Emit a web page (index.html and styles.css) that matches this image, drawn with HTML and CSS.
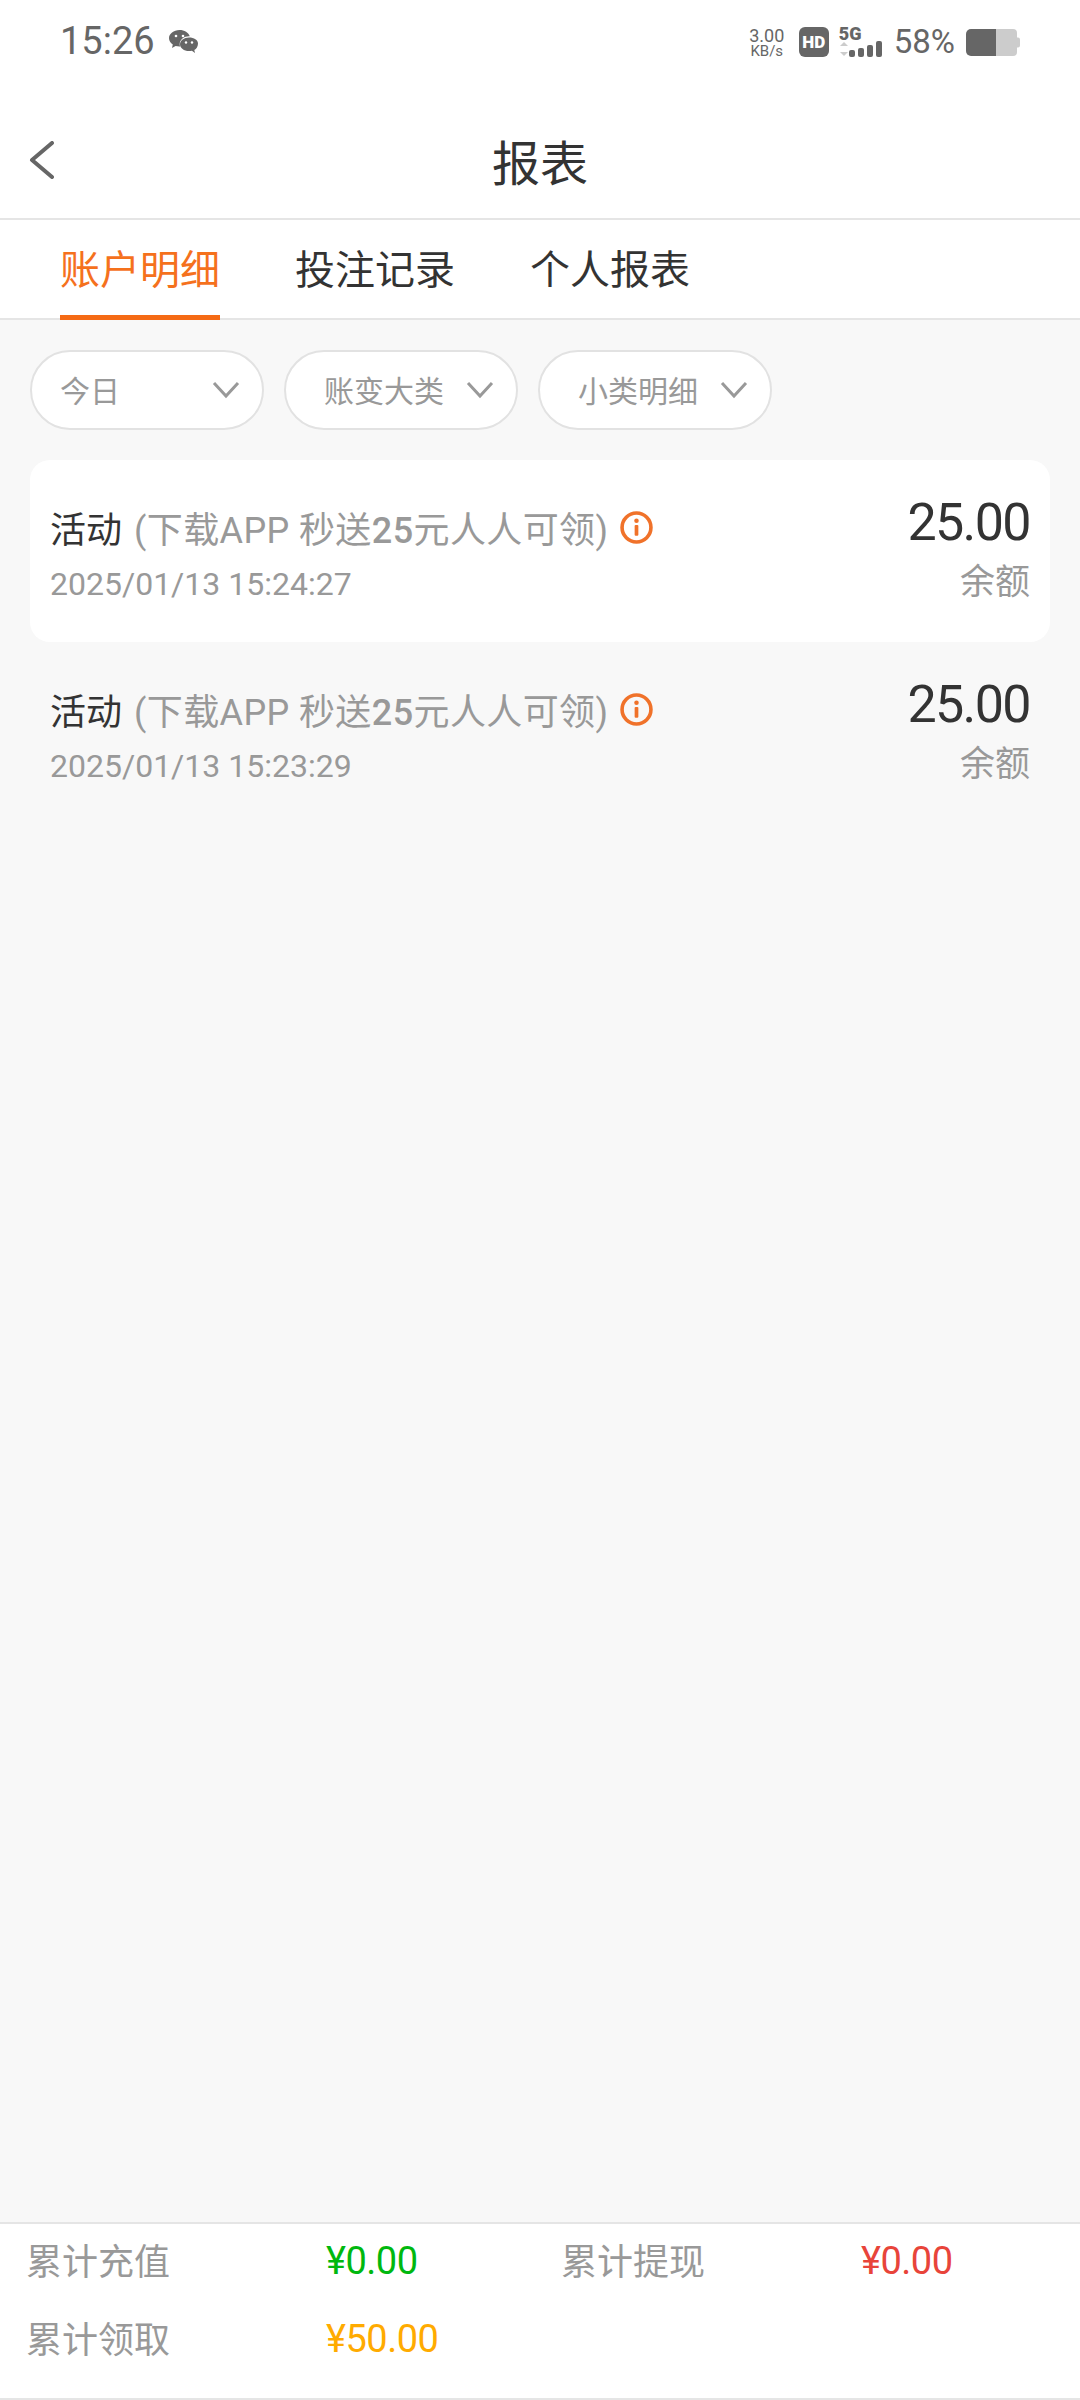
FILE: index.html
```html
<!DOCTYPE html>
<html lang="zh-CN">
<head>
  <meta charset="UTF-8" />
  <meta name="viewport" content="width=device-width, initial-scale=1.0"/>
  <title>报表</title>
  <link rel="stylesheet" href="styles.css">
</head>
<body>
  <div class="status-bar">
    <div class="status-left">
      <span class="status-time">15:26</span>
      <svg class="wechat-icon" viewBox="0 0 29 24" width="29" height="24">
        <path fill="#666" d="M10.5 0C4.7 0 0 3.7 0 8.3c0 2.6 1.5 4.8 3.8 6.3L3 18l3.6-1.9c1.2.3 2.5.5 3.9.5h.6a7.2 7.2 0 0 1-.4-2.4c0-4.6 4.3-8 9.4-8h.7C19.600 2.600 15.400 0 10.500 0z"/>
        <path fill="#666" d="M20 7.500c-5 0-9 3-9 6.800s4 6.800 9 6.800c1 0 2-.1 2.900-.4L26 23l-.7-3c2.200-1.300 3.700-3.700 3.700-6.600 0-3.500-4-5.900-9-5.900z"/>
        <circle cx="7" cy="6" r="1.300" fill="#fff"/><circle cx="14" cy="6" r="1.300" fill="#fff"/>
        <circle cx="17" cy="12.500" r="1.200" fill="#fff"/><circle cx="23" cy="12.500" r="1.200" fill="#fff"/>
      </svg>
    </div>
    <div class="status-right">
      <div class="net-speed"><span class="net-value">3.00</span><span class="net-unit">KB/s</span></div>
      <span class="hd-badge">HD</span>
      <div class="signal">
        <span class="signal-5g">5G</span>
        <svg class="signal-svg" viewBox="0 0 45 16" width="45" height="16">
          <path fill="#ccc" d="M5 1l4 4H1z"/><path fill="#ccc" d="M5 15l4-4H1z"/>
          <rect x="10" y="9" width="6" height="7" rx="2" fill="#666"/>
          <rect x="19" y="7" width="6" height="9" rx="2" fill="#666"/>
          <rect x="28" y="4" width="6" height="12" rx="2" fill="#666"/>
          <rect x="37" y="0" width="6" height="16" rx="2" fill="#666"/>
        </svg>
      </div>
      <span class="battery-text">58%</span>
      <svg class="battery" viewBox="0 0 54 27" width="54" height="27">
        <path fill="#ccc" d="M30 0h17a4 4 0 0 1 4 4v4.500h1a2 2 0 0 1 2 2v6a2 2 0 0 1-2 2h-1V23a4 4 0 0 1-4 4H30z"/>
        <path fill="#666" d="M5 0h25v27H5a5 5 0 0 1-5-5V5a5 5 0 0 1 5-5z"/>
      </svg>
    </div>
  </div>

  <div class="header">
    <svg class="back-icon" viewBox="0 0 26 38" width="26" height="38">
      <path d="M23 2L3 19l20 17" fill="none" stroke="#666" stroke-width="4" stroke-linecap="round" stroke-linejoin="round"/>
    </svg>
    <h1 class="header-title">报表</h1>
  </div>

  <div class="tabs">
    <div class="tab tab-active">账户明细</div>
    <div class="tab">投注记录</div>
    <div class="tab">个人报表</div>
  </div>

  <div class="content">
    <div class="filters">
      <div class="filter filter-today">
        <span>今日</span>
        <svg viewBox="0 0 28 18" width="28" height="18"><path d="M2 2l12 13L26 2" fill="none" stroke="#999" stroke-width="3"/></svg>
      </div>
      <div class="filter">
        <span>账变大类</span>
        <svg viewBox="0 0 28 18" width="28" height="18"><path d="M2 2l12 13L26 2" fill="none" stroke="#999" stroke-width="3"/></svg>
      </div>
      <div class="filter">
        <span>小类明细</span>
        <svg viewBox="0 0 28 18" width="28" height="18"><path d="M2 2l12 13L26 2" fill="none" stroke="#999" stroke-width="3"/></svg>
      </div>
    </div>

    <div class="record record-white">
      <div class="record-left">
        <div class="record-title">
          <span class="record-type">活动</span>
          <span class="record-desc">(下载APP 秒送<b>25</b>元人人可领)</span>
          <svg class="info-icon" viewBox="0 0 32 32" width="33" height="33">
            <circle cx="16" cy="16" r="14" fill="none" stroke="#f0722a" stroke-width="3.500"/>
            <circle cx="16" cy="9.500" r="2.200" fill="#f0722a"/>
            <rect x="14.200" y="13.500" width="3.600" height="10.500" rx="1" fill="#f0722a"/>
          </svg>
        </div>
        <div class="record-date">2025/01/13 15:24:27</div>
      </div>
      <div class="record-right">
        <div class="record-amount">25.00</div>
        <div class="record-label">余额</div>
      </div>
    </div>

    <div class="record">
      <div class="record-left">
        <div class="record-title">
          <span class="record-type">活动</span>
          <span class="record-desc">(下载APP 秒送<b>25</b>元人人可领)</span>
          <svg class="info-icon" viewBox="0 0 32 32" width="33" height="33">
            <circle cx="16" cy="16" r="14" fill="none" stroke="#f0722a" stroke-width="3.500"/>
            <circle cx="16" cy="9.500" r="2.200" fill="#f0722a"/>
            <rect x="14.200" y="13.500" width="3.600" height="10.500" rx="1" fill="#f0722a"/>
          </svg>
        </div>
        <div class="record-date">2025/01/13 15:23:29</div>
      </div>
      <div class="record-right">
        <div class="record-amount">25.00</div>
        <div class="record-label">余额</div>
      </div>
    </div>
  </div>

  <div class="summary">
    <div class="summary-cell"><span class="summary-label">累计充值</span><span class="summary-value green">¥0.00</span></div>
    <div class="summary-cell"><span class="summary-label">累计提现</span><span class="summary-value red">¥0.00</span></div>
    <div class="summary-cell"><span class="summary-label">累计领取</span><span class="summary-value amber">¥50.00</span></div>
  </div>
</body>
</html>
```

FILE: styles.css
```css
* {
  box-sizing: border-box;
}
body {
  margin: 0;
  padding: 0;
  width: 1080px;
  height: 2400px;
  display: flex;
  flex-direction: column;
  font-family: Roboto, "Noto Sans CJK SC", sans-serif;
  background-color: #fff;
  color: #333;
}

/* status bar */
.status-bar {
  height: 80px;
  padding: 0 60px;
  display: flex;
  justify-content: space-between;
  align-items: flex-start;
  color: #666;
}
.status-left {
  display: flex;
  align-items: center;
  gap: 14px;
  padding-top: 20px;
}
.status-time {
  font-size: 38px;
  line-height: 43px;
}
.status-right {
  display: flex;
  align-items: center;
  padding-top: 27px;
}
.net-speed {
  width: 38px;
  height: 30px;
  margin-right: 13px;
  display: flex;
  flex-direction: column;
  align-items: center;
}
.net-value {
  font-size: 18px;
  line-height: 17px;
}
.net-unit {
  font-size: 15px;
  line-height: 14px;
}
.hd-badge {
  width: 30px;
  height: 30px;
  margin-right: 10px;
  background: #666;
  color: #fff;
  border-radius: 6px;
  font-size: 17px;
  font-weight: 900;
  line-height: 30px;
  text-align: center;
}
.signal {
  width: 45px;
  height: 30px;
  margin-right: 10px;
  font-size: 18px;
  font-weight: 900;
  line-height: 14px;
}
.signal-5g {
  display: block;
  height: 14px;
}
.signal-svg {
  display: block;
}
.battery-text {
  font-size: 33px;
  line-height: 30px;
  margin-right: 11px;
}

/* header */
.header {
  height: 140px;
  padding-top: 22px;
  border-bottom: 2px solid #e5e5e5;
  display: flex;
  align-items: center;
  justify-content: center;
  position: relative;
}
.back-icon {
  position: absolute;
  left: 29px;
  top: 61px;
}
.header-title {
  margin: 0;
  font-size: 48px;
  font-weight: 400;
  color: #333;
}

/* tabs */
.tabs {
  height: 100px;
  padding-left: 60px;
  display: flex;
  gap: 75px;
  border-bottom: 2px solid #e5e5e5;
}
.tab {
  height: 101px;
  font-size: 40px;
  line-height: 102px;
  color: #333;
}
.tab-active {
  color: #f5711d;
  border-bottom: 6px solid #f56a14;
}

/* list */
.content {
  flex: 1;
  background-color: #f8f8f8;
  padding: 30px 30px 0;
}
.filters {
  display: flex;
  gap: 20px;
  margin-bottom: 30px;
}
.filter {
  width: 234px;
  height: 80px;
  background: #fff;
  border: 2px solid #e2e2e2;
  border-radius: 40px;
  padding: 0 22px 0 38px;
  display: flex;
  align-items: center;
  justify-content: space-between;
  font-size: 30px;
  color: #999;
}
.filter span {
  padding-bottom: 2px;
}
.filter-today {
  padding-left: 28px;
}
.record {
  height: 182px;
  padding: 0 20px;
  border-radius: 20px;
  display: flex;
  justify-content: space-between;
  align-items: flex-start;
}
.record-white {
  background: #fff;
}
.record-title {
  display: flex;
  align-items: center;
  margin-top: 42px;
  height: 50px;
  font-size: 36px;
}
.record-type {
  color: #333;
  margin-right: 12px;
}
.record-desc {
  color: #999;
  letter-spacing: 0.4px;
}
.record-desc b {
  font-weight: 500;
}
.info-icon {
  margin-left: 12px;
}
.record-date {
  margin-top: 12px;
  font-size: 32px;
  line-height: 40px;
  color: #999;
}
.record-right {
  text-align: right;
}
.record-amount {
  margin-top: 33px;
  font-size: 52px;
  letter-spacing: -1.6px;
  line-height: 60px;
  color: #333;
}
.record-label {
  font-size: 35px;
  line-height: 60px;
  color: #999;
}

/* totals */
.summary {
  height: 178px;
  border-top: 2px solid #e5e5e5;
  border-bottom: 2px solid #e5e5e5;
  display: grid;
  grid-template-columns: 535px 1fr;
  grid-auto-rows: 78px;
  padding: 0 0 0 26px;
}
.summary-cell {
  display: flex;
  align-items: center;
  margin-top: -8px;
}
.summary-label {
  width: 300px;
  font-size: 36px;
  color: #999;
}
.summary-value {
  font-size: 38px;
  letter-spacing: -0.5px;
  padding-top: 3px;
}
.green {
  color: #00b80f;
}
.red {
  color: #e8443a;
}
.amber {
  color: #ffab00;
}
```
